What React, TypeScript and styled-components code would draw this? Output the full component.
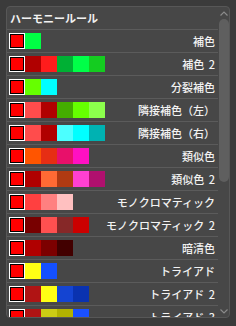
import React from "react";
import styled, { createGlobalStyle } from "styled-components";

const GlobalStyle = createGlobalStyle`
  html, body {
    margin: 0;
    padding: 0;
    background: #3b3b3b;
  }
  body {
    font-family: "Noto Sans CJK JP", "Noto Sans", sans-serif;
    color: #eeeeee;
  }
`;

interface Harmony {
  name: string;
  colors: string[];
}

const HARMONIES: Harmony[] = [
  { name: "補色", colors: ["#00ff44"] },
  {
    name: "補色 2",
    colors: ["#b00000", "#ff1c1c", "#00b034", "#00ff48", "#14cc20"],
  },
  { name: "分裂補色", colors: ["#66ff00", "#00ffff"] },
  {
    name: "隣接補色（左）",
    colors: ["#ff4c4c", "#b00000", "#44ad00", "#66ff00", "#8cff4c"],
  },
  {
    name: "隣接補色（右）",
    colors: ["#ff4c4c", "#b00000", "#4cffff", "#00ffff", "#00b2b2"],
  },
  { name: "類似色", colors: ["#ff5500", "#e62e14", "#e8106a", "#ff10c2"] },
  {
    name: "類似色 2",
    colors: ["#b00000", "#ff6a34", "#b03a12", "#ff40d2", "#b0106e"],
  },
  { name: "モノクロマティック", colors: ["#ff4040", "#ff8080", "#ffc0c0"] },
  {
    name: "モノクロマティック 2",
    colors: ["#780000", "#ff5050", "#862828", "#cc0000"],
  },
  { name: "暗清色", colors: ["#b00000", "#7c0000", "#420000"] },
  { name: "トライアド", colors: ["#ffff14", "#1450ff"] },
  {
    name: "トライアド 2",
    colors: ["#b01414", "#ffff14", "#1444d2", "#0a32b0"],
  },
  {
    name: "トライアド 3",
    colors: ["#b01414", "#cccc14", "#b2b200", "#1a50ff"],
  },
];

const Frame = styled.div`
  padding: 6px;
  height: 326px;
  box-sizing: border-box;
`;

const Panel = styled.div`
  display: flex;
  height: 312px;
  box-sizing: border-box;
  border: 1px solid #575757;
  border-radius: 4px;
  background: #474747;
  overflow: hidden;
`;

const List = styled.div`
  flex: 1;
  min-width: 0;
  overflow: hidden;
`;

const Header = styled.div`
  height: 22px;
  display: flex;
  align-items: center;
  padding-left: 3px;
  border-bottom: 1px solid #5b5b5b;
  font-size: 11px;
  font-weight: 700;
  color: #f2f2f2;
`;

const Row = styled.div`
  height: 22px;
  display: flex;
  align-items: center;
  justify-content: space-between;
  padding: 0 3px 0 2px;
  border-bottom: 1px solid #5b5b5b;
`;

const Swatches = styled.div`
  display: flex;
`;

const BaseSwatch = styled.div`
  width: 16px;
  height: 16px;
  box-sizing: border-box;
  border: 1px solid #ffffff;
  box-shadow: inset 0 0 0 1px #000000;
  background: #ff0000;
`;

const Swatch = styled.div<{ $color: string }>`
  width: 16px;
  height: 16px;
  background: ${({ $color }) => $color};
`;

const Label = styled.span`
  font-size: 11px;
  font-weight: 500;
  word-spacing: 2px;
  color: #f2f2f2;
  white-space: nowrap;
`;

const ScrollBar = styled.div`
  width: 11px;
  display: flex;
  flex-direction: column;
  align-items: center;
`;

const Arrow = styled.div`
  height: 12px;
  display: flex;
  align-items: center;
  justify-content: center;
`;

const Thumb = styled.div`
  width: 10px;
  height: 163px;
  margin-left: 1px;
  border-radius: 5px;
  background: #5f5f5f;
`;

const Spacer = styled.div`
  flex: 1;
`;

function Chevron({ down }: { down?: boolean }) {
  return (
    <svg width="8" height="5" viewBox="0 0 8 5">
      <polyline
        points={down ? "0.5,0.5 4,4 7.5,0.5" : "0.5,4.5 4,1 7.5,4.5"}
        fill="none"
        stroke="#8a8a8a"
        strokeWidth="1.2"
      />
    </svg>
  );
}

export default function App() {
  return (
    <>
      <GlobalStyle />
      <Frame>
        <Panel>
          <List>
            <Header>ハーモニールール</Header>
            {HARMONIES.map((h) => (
              <Row key={h.name}>
                <Swatches>
                  <BaseSwatch />
                  {h.colors.map((c, i) => (
                    <Swatch key={i} $color={c} />
                  ))}
                </Swatches>
                <Label>{h.name}</Label>
              </Row>
            ))}
          </List>
          <ScrollBar>
            <Arrow>
              <Chevron />
            </Arrow>
            <Thumb />
            <Spacer />
            <Arrow>
              <Chevron down />
            </Arrow>
          </ScrollBar>
        </Panel>
      </Frame>
    </>
  );
}
